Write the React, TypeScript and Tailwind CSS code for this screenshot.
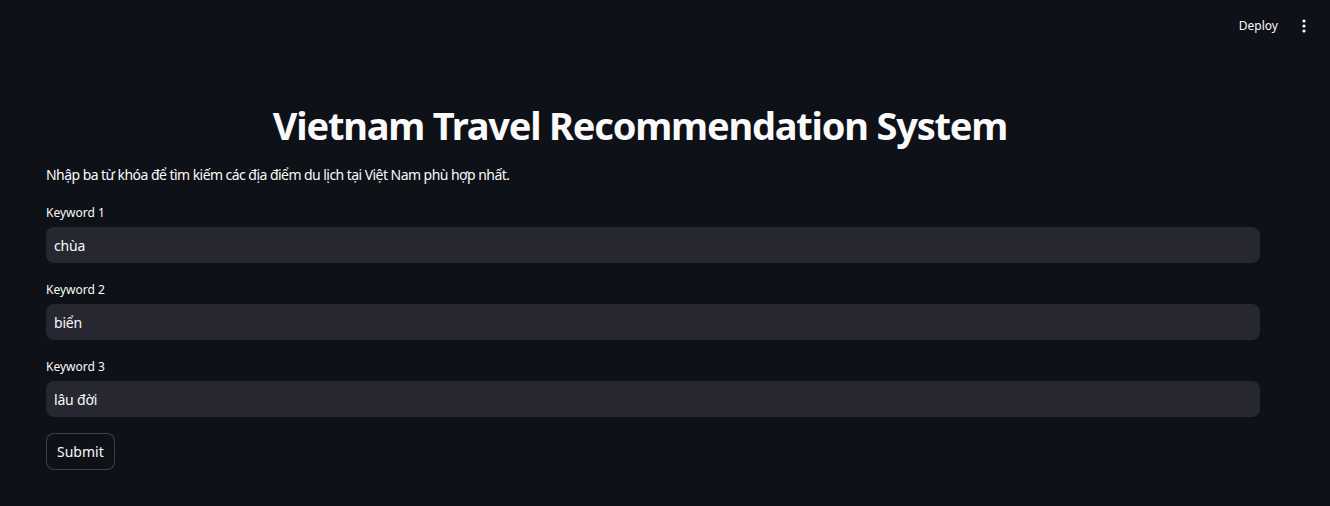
import React from "react";

const font = { fontFamily: '"Noto Sans", "Open Sans", sans-serif' };

function Field({ label, value }: { label: string; value: string }) {
  return (
    <div className="flex flex-col">
      <label className="text-[12px] leading-[20px] text-[#fafafa] h-[20px] mb-[4px]">{label}</label>
      <div className="h-[36px] rounded-[8px] bg-[#262730] flex items-center px-[8px] text-[14px] tracking-[-0.2px] text-[#fafafa]">
        {value}
      </div>
    </div>
  );
}

export default function App() {
  return (
    <div className="w-[1330px] h-[506px] bg-[#0e1117] text-[#fafafa] overflow-hidden" style={font}>
      <header className="h-[52px] flex items-center justify-end pr-[18px]">
        <span className="text-[12px] mr-[18px]">Deploy</span>
        <svg width="16" height="16" viewBox="0 0 16 16" fill="#fafafa">
          <circle cx="8" cy="3" r="1.6" />
          <circle cx="8" cy="8" r="1.6" />
          <circle cx="8" cy="13" r="1.6" />
        </svg>
      </header>
      <main className="px-[46px] w-[1306px]">
        <h1 className="text-center font-bold text-[38px] leading-[54px] mt-[46px] pr-[26px] tracking-[-1.2px]">
          Vietnam Travel Recommendation System
        </h1>
        <p className="text-[14px] leading-[24px] mt-[11px] tracking-[-0.55px]">
          Nhập ba từ khóa để tìm kiếm các địa điểm du lịch tại Việt Nam phù hợp nhất.
        </p>
        <div className="flex flex-col gap-[17px] mt-[16px]">
          <Field label="Keyword 1" value="chùa" />
          <Field label="Keyword 2" value="biển" />
          <Field label="Keyword 3" value="lâu đời" />
        </div>
        <button className="mt-[16px] h-[37px] px-[10px] rounded-[8px] border border-[rgba(250,250,250,0.2)] text-[14px] text-[#fafafa] bg-[#0e1117]">
          Submit
        </button>
      </main>
    </div>
  );
}
